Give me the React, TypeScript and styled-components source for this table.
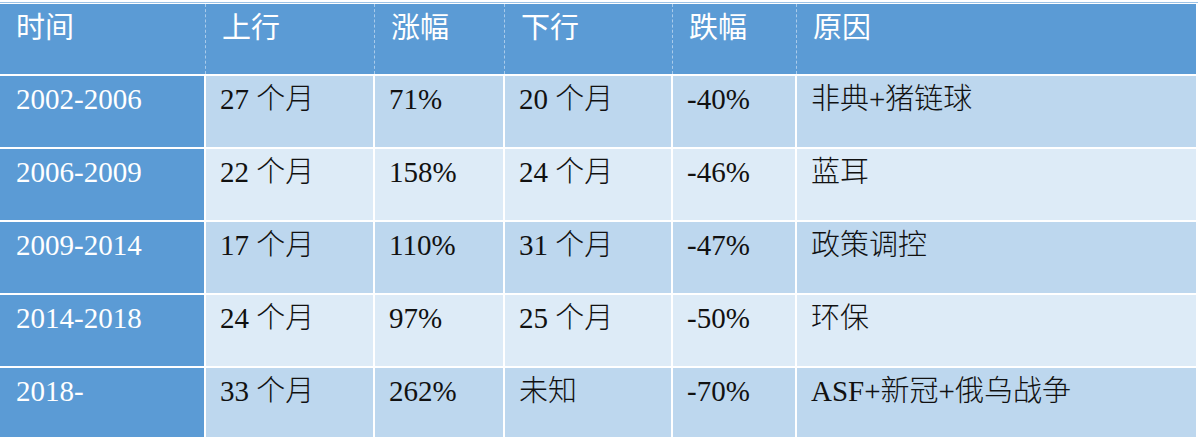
import React from "react";
import styled, { createGlobalStyle } from "styled-components";

const Global = createGlobalStyle`
  html, body { margin: 0; padding: 0; background: #ffffff; }
  body { font-family: "Liberation Serif", "Noto Sans CJK SC", serif; }
`;

const Page = styled.div`
  padding-top: 2px;
  width: 1198px;
`;

const TopRule = styled.div`
  height: 1px;
  background: #9dc3e6;
  margin-bottom: 1px;
`;

const Table = styled.div`
  width: 1196px;
  display: flex;
  flex-direction: column;
`;

const cols = "206px 169px 130px 168px 124px 399px";

const HeadRow = styled.div`
  display: grid;
  grid-template-columns: ${cols};
  height: 70px;
  background: #5b9bd5;
  border-bottom: 2px solid #ffffff;
`;

const HeadCell = styled.div<{ $last?: boolean }>`
  box-sizing: border-box;
  padding: 3px 0 0 16px;
  font-family: "Noto Sans CJK SC", sans-serif;
  font-size: 29px;
  line-height: 36px;
  color: #ffffff;
  border-right: ${(p) => (p.$last ? "none" : "1px dashed #a9cbeb")};
`;

const BodyRow = styled.div<{ $alt: boolean }>`
  display: grid;
  grid-template-columns: ${cols};
  height: 71px;
  border-bottom: 2px solid #ffffff;
  background: ${(p) => (p.$alt ? "#ddebf7" : "#bdd7ee")};
`;

const Cell = styled.div<{ $first?: boolean; $last?: boolean }>`
  box-sizing: border-box;
  padding: 5px 0 0 ${(p) => (p.$first ? 16 : 14)}px;
  font-family: "Liberation Serif", "Noto Sans CJK SC", serif;
  font-size: 29px;
  font-weight: 300;
  line-height: 36px;
  color: ${(p) => (p.$first ? "#ffffff" : "#111111")};
  background: ${(p) => (p.$first ? "#5b9bd5" : "transparent")};
  border-right: ${(p) => (p.$last ? "none" : "2px solid #ffffff")};
  white-space: nowrap;
`;

const headers = ["时间", "上行", "涨幅", "下行", "跌幅", "原因"];

const rows: string[][] = [
  ["2002-2006", "27 个月", "71%", "20 个月", "-40%", "非典+猪链球"],
  ["2006-2009", "22 个月", "158%", "24 个月", "-46%", "蓝耳"],
  ["2009-2014", "17 个月", "110%", "31 个月", "-47%", "政策调控"],
  ["2014-2018", "24 个月", "97%", "25 个月", "-50%", "环保"],
  ["2018-", "33 个月", "262%", "未知", "-70%", "ASF+新冠+俄乌战争"],
];

export default function App() {
  return (
    <>
      <Global />
      <Page>
        <TopRule />
        <Table>
          <HeadRow>
            {headers.map((h, i) => (
              <HeadCell key={h} $last={i === headers.length - 1}>
                {h}
              </HeadCell>
            ))}
          </HeadRow>
          {rows.map((r, ri) => (
            <BodyRow key={r[0]} $alt={ri % 2 === 1}>
              {r.map((c, ci) => (
                <Cell key={ci} $first={ci === 0} $last={ci === r.length - 1}>
                  {c}
                </Cell>
              ))}
            </BodyRow>
          ))}
        </Table>
      </Page>
    </>
  );
}
